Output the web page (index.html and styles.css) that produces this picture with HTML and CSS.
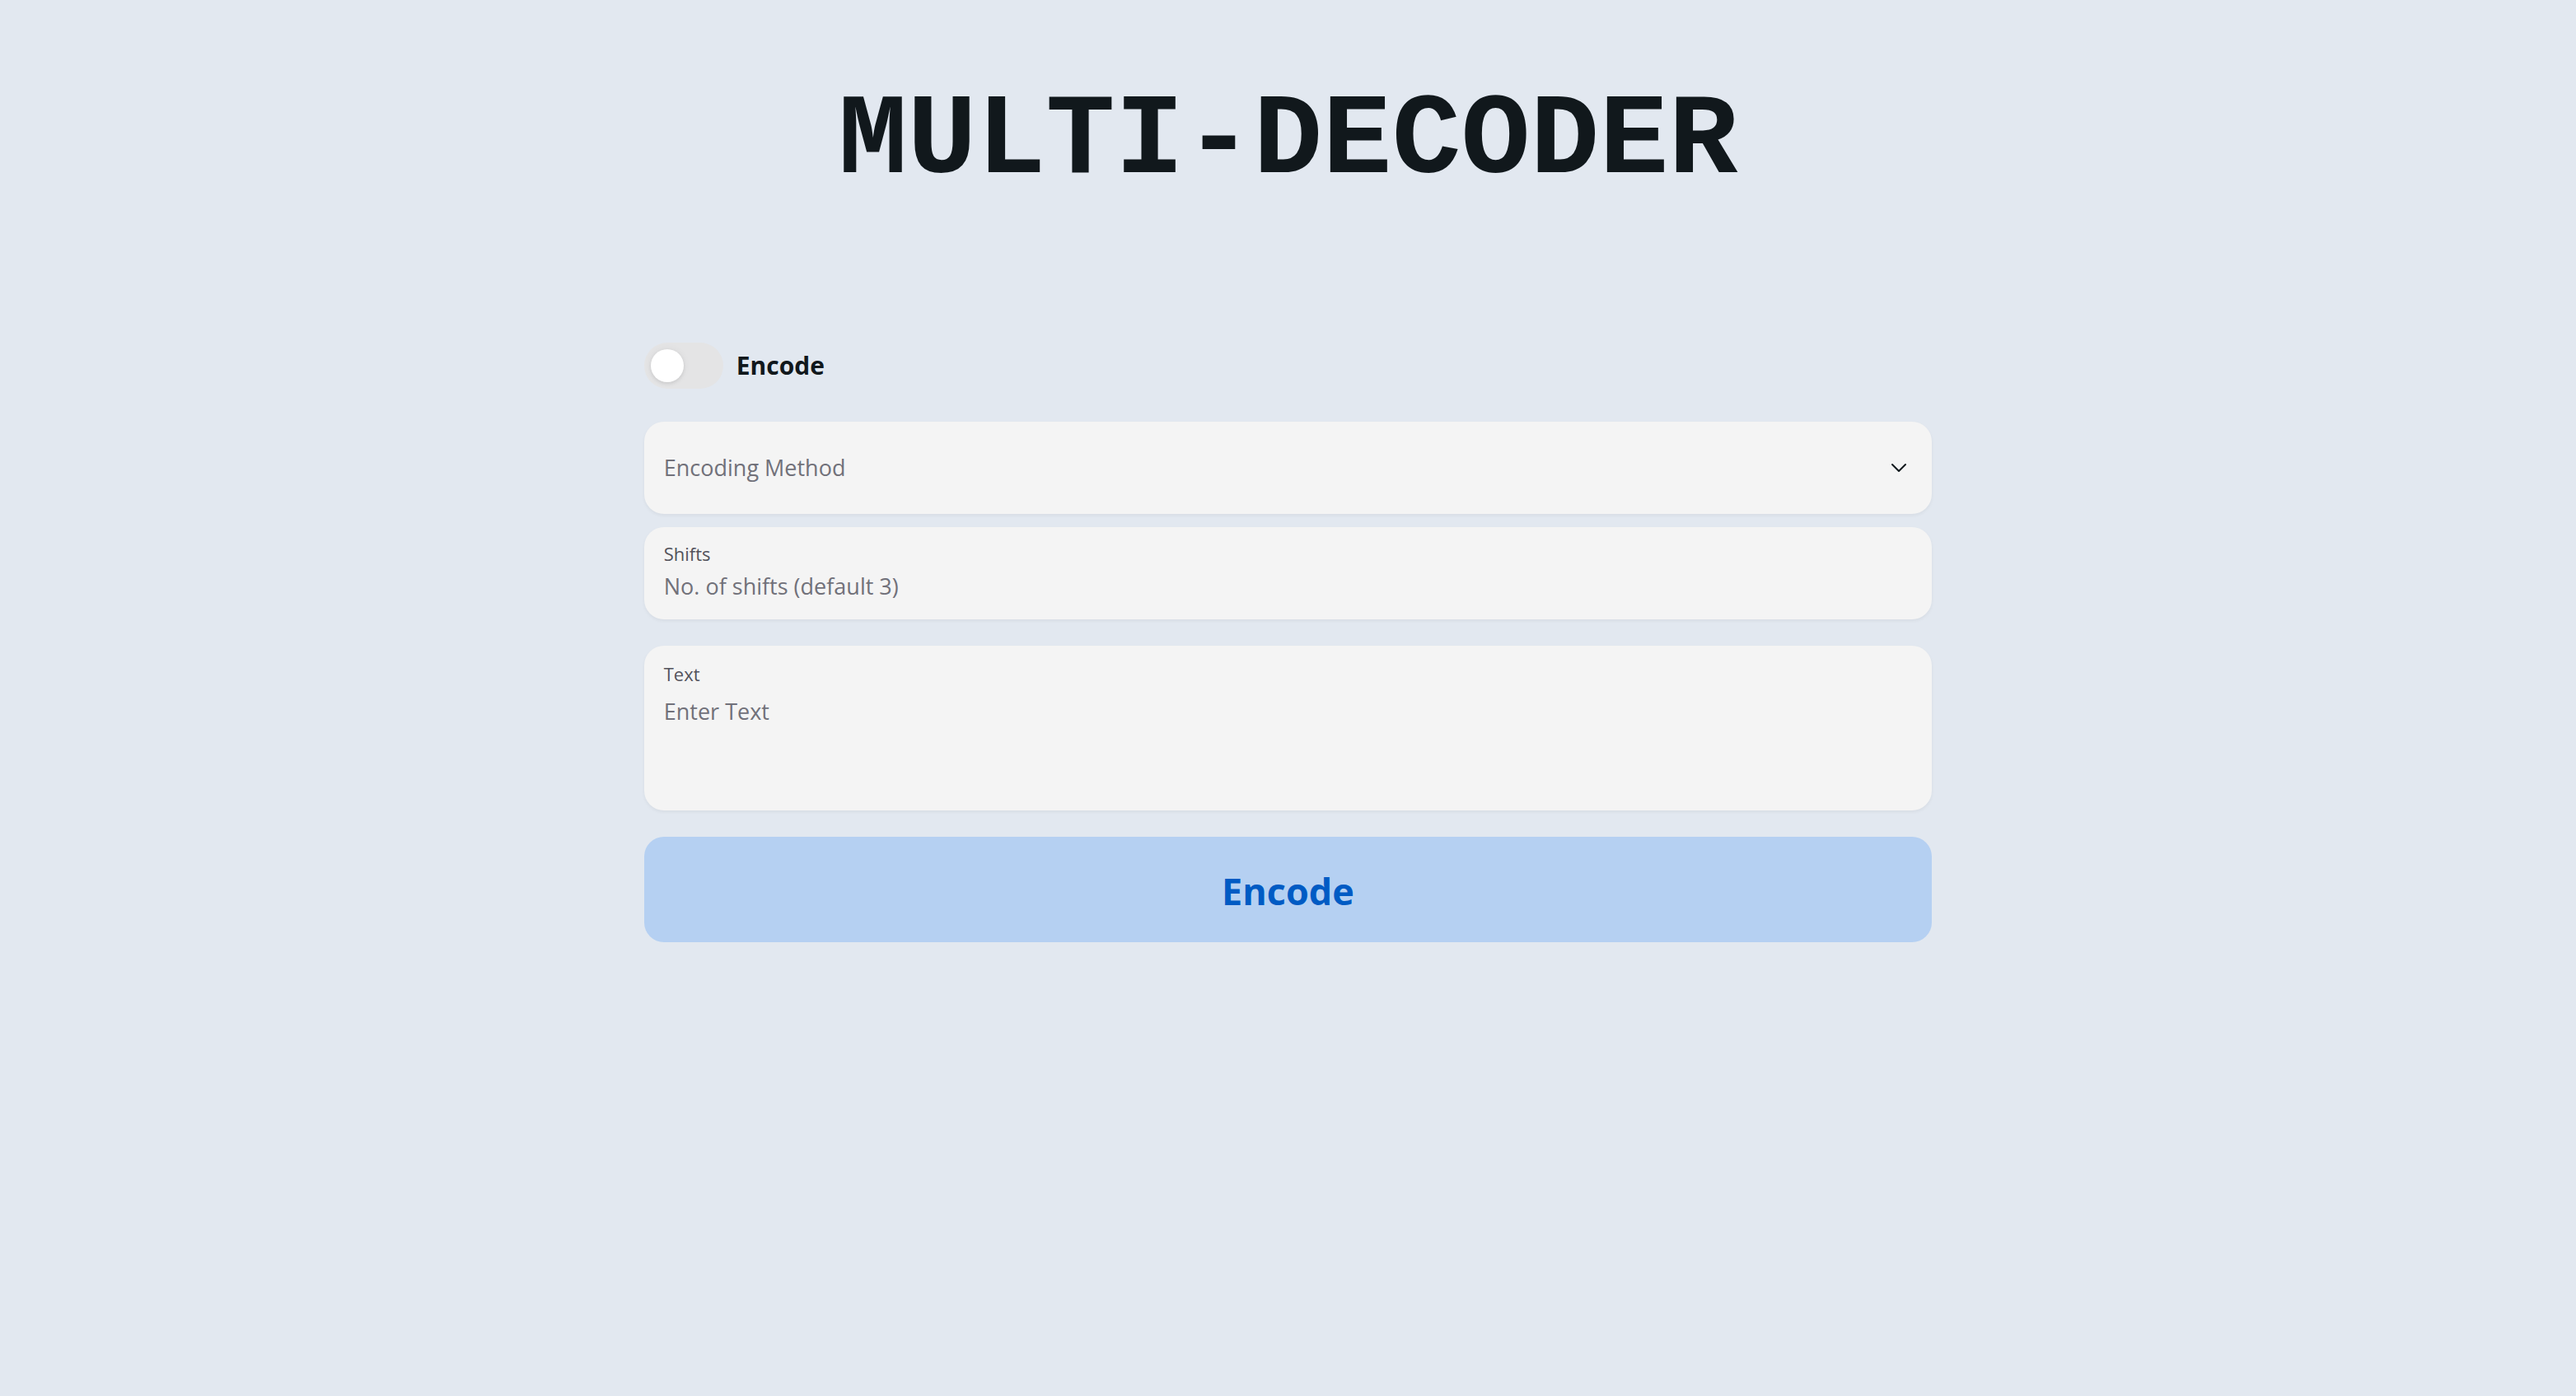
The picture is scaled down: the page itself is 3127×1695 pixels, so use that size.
FILE: index.html
```html
<!DOCTYPE html>
<html lang="en">
<head>
<meta charset="utf-8">
<meta name="viewport" content="width=device-width, initial-scale=1">
<title>Multi-Decoder</title>
<link rel="stylesheet" href="styles.css">
</head>
<body>
<main class="page">
  <h1 class="title">MULTI-DECODER</h1>
  <form class="form">
    <label class="switch">
      <input class="switch-input" type="checkbox" role="switch">
      <span class="switch-label">Encode</span>
    </label>
    <div class="fields">
      <div class="field field-select">
        <select class="select" aria-label="Encoding Method">
          <option>Encoding Method</option>
        </select>
        <svg class="chevron" viewBox="0 0 24 24" aria-hidden="true"><path d="m4 8 8 8 8-8"/></svg>
      </div>
      <div class="field field-input">
        <label class="label" for="shifts">Shifts</label>
        <input class="input" id="shifts" type="text" placeholder="No. of shifts (default 3)">
      </div>
    </div>
    <div class="field field-text">
      <label class="label" for="text">Text</label>
      <textarea class="textarea" id="text" placeholder="Enter Text"></textarea>
    </div>
    <button class="button" type="button">Encode</button>
  </form>
</main>
</body>
</html>
```
FILE: styles.css
```css
* {
  box-sizing: border-box;
}

body {
  margin: 0;
  min-height: 100vh;
  background: #e2e8f0;
  color: #11181c;
  font-family: "Open Sans", "Noto Sans", sans-serif;
}

.page {
  display: flex;
  flex-direction: column;
  align-items: center;
  padding: 100px 0;
}

.title {
  margin: 0 0 172px;
  font-family: "Liberation Mono", monospace;
  font-size: 140px;
  font-weight: 700;
  line-height: 144px;
}

.form {
  display: flex;
  flex-direction: column;
  gap: 32px;
  width: 50%;
}

.switch {
  display: flex;
  align-items: center;
  gap: 16px;
  height: 56px;
  margin-bottom: 8px;
}

.switch-input {
  appearance: none;
  display: flex;
  width: 96px;
  height: 56px;
  margin: 0;
  padding: 8px;
  border-radius: 28px;
  background: #e4e4e5;
}

.switch-input::before {
  content: "";
  width: 40px;
  height: 40px;
  border-radius: 50%;
  background: #fff;
  box-shadow: 0 0 10px rgba(0, 0, 0, 0.06), 0 2px 4px rgba(0, 0, 0, 0.08);
}

.switch-input:checked::before {
  margin-left: 40px;
}

.switch-label {
  font-size: 30px;
  font-weight: 700;
  line-height: 40px;
}

.fields {
  display: flex;
  flex-direction: column;
  gap: 16px;
}

.field {
  display: flex;
  flex-direction: column;
  border-radius: 24px;
  background: #f4f4f4;
  box-shadow: 0 2px 4px rgba(0, 0, 0, 0.05);
}

.field-select {
  position: relative;
}

.field-input {
  height: 112px;
  padding: 16px 24px;
  gap: 4px;
}

.field-text {
  height: 200px;
  padding: 18px 24px;
  gap: 10px;
}

.select,
.input,
.textarea {
  width: 100%;
  margin: 0;
  padding: 0;
  border: 0;
  background: transparent;
  color: #71717a;
  font: 400 27px/40px "Open Sans", "Noto Sans", sans-serif;
}

.select {
  appearance: none;
  height: 112px;
  padding: 0 24px;
  border-radius: 24px;
}

.input {
  height: 40px;
}

.textarea {
  flex: 1;
  resize: none;
}

.input::placeholder,
.textarea::placeholder {
  color: #71717a;
}

.label {
  color: #52525b;
  font-size: 22px;
  line-height: 32px;
}

.chevron {
  position: absolute;
  top: 44px;
  right: 28px;
  width: 24px;
  height: 24px;
  fill: none;
  stroke: #11181c;
  stroke-width: 2;
  stroke-linecap: round;
  stroke-linejoin: round;
  pointer-events: none;
}

.button {
  height: 128px;
  padding: 4px 0 0;
  border: 0;
  border-radius: 24px;
  background: #b5d0f2;
  color: #005bc4;
  font: 700 45px/64px "Open Sans", "Noto Sans", sans-serif;
}
```
